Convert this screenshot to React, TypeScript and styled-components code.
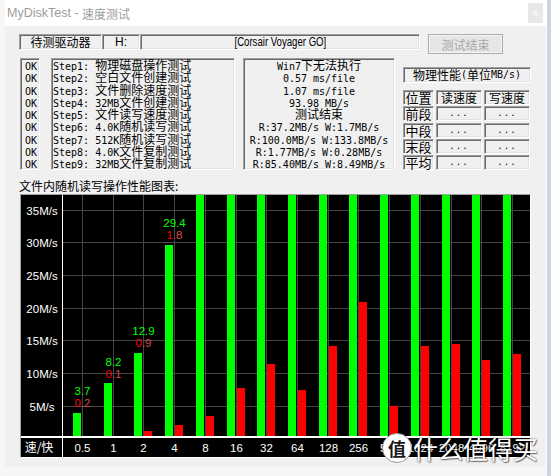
import React from "react";
import styled, { createGlobalStyle, css } from "styled-components";

const Global = createGlobalStyle`
  html, body { margin: 0; padding: 0; }
  body {
    width: 551px; height: 476px; overflow: hidden;
    background: linear-gradient(90deg, #f6f6f6 0, #f6f6f6 547px, #ccd4de 547px);
    font-family: "Liberation Sans", "Noto Sans CJK SC", sans-serif;
  }
`;

const sunken = css`
  box-sizing: border-box;
  border-style: solid;
  border-width: 1px;
  border-color: #a0a0a0 #ffffff #ffffff #a0a0a0;
  box-shadow: inset 1px 1px 0 #696969, inset -1px -1px 0 #e3e3e3;
  background: #f0f0f0;
`;

const Window = styled.div`
  position: relative;
  margin-left: 5px;
  width: 541px;
  height: 467px;
  background: #f0f0f0;
  border-right: 1px solid #ffffff;
  display: flex;
  flex-direction: column;
`;

const TitleBar = styled.div`
  height: 26px;
  background: #ffffff;
  display: flex;
  align-items: center;
  padding-left: 2px;
  font-family: "Liberation Sans", "Noto Sans CJK SC", sans-serif;
  font-size: 12.5px;
  color: #9c9c9c;
  white-space: pre;
`;

const CloseBtn = styled.div`
  margin-left: auto;
  margin-right: 3px;
  width: 15px;
  height: 20px;
  background: #e8e8e8;
  color: #ffffff;
  font-size: 11px;
  display: flex;
  align-items: center;
  justify-content: center;
`;

const Content = styled.div`
  padding: 8px 0 0 14px;
  display: flex;
  flex-direction: column;
`;

const DriveRow = styled.div`
  display: flex;
  align-items: flex-start;
`;

const Field = styled.div<{ $w: number; $cjk?: boolean }>`
  ${sunken};
  width: ${(p) => p.$w}px;
  height: 16px;
  display: flex;
  align-items: center;
  justify-content: center;
  font-family: ${(p) =>
    p.$cjk ? '"Noto Sans CJK SC", sans-serif' : '"Liberation Sans", sans-serif'};
  font-size: 12px;
  line-height: 1;
  color: #000;
  white-space: pre;
  overflow: hidden;
`;

const Narrow = styled.span`
  display: inline-block;
  transform: scaleX(0.8);
  white-space: pre;
`;

const EndButton = styled.button`
  margin-left: 8px;
  width: 75px;
  height: 20px;
  box-sizing: border-box;
  border: 1px solid #adadad;
  box-shadow: inset 0 0 0 1px #f4f4f4;
  background: #e6e6e6;
  color: #a6a6a6;
  font-family: "Noto Sans CJK SC", sans-serif;
  font-size: 12px;
  padding: 0;
`;

const InfoRow = styled.div`
  display: flex;
  margin-top: 4px;
  margin-left: 1px;
  height: 112px;
`;

const TextBox = styled.div<{ $w: number; $gap?: number; $center?: boolean; $pl?: number }>`
  ${sunken};
  width: ${(p) => p.$w}px;
  height: 112px;
  margin-left: ${(p) => p.$gap ?? 0}px;
  padding: 0 0 0 ${(p) => p.$pl ?? 1}px;
  text-align: ${(p) => (p.$center ? "center" : "left")};
  overflow: hidden;
  color: #000;
`;

const Line = styled.div`
  height: 12.3px;
  line-height: 12.3px;
  white-space: pre;
`;

const Half = styled.span`
  font-family: "DejaVu Sans Mono", "Liberation Mono", monospace;
  font-size: 10px;
`;

const Full = styled.span`
  font-family: "Noto Sans CJK SC", sans-serif;
  font-size: 12px;
`;

const Panel = styled.div`
  margin-left: 8px;
  width: 128px;
  display: flex;
  flex-direction: column;
`;

const PerfTitle = styled.div`
  ${sunken};
  margin-top: 9px;
  height: 16px;
  display: flex;
  align-items: center;
  justify-content: center;
  line-height: 1;
  white-space: pre;
`;

const Table = styled.div`
  margin-top: 7px;
  display: grid;
  grid-template-columns: 31px 46px 46px;
  grid-auto-rows: 15px;
  column-gap: 2px;
  row-gap: 1.25px;
`;

const Cell = styled.div<{ $big?: boolean; $dots?: boolean }>`
  ${sunken};
  display: flex;
  align-items: center;
  justify-content: center;
  font-family: ${(p) =>
    p.$dots ? '"DejaVu Sans Mono", monospace' : '"Noto Sans CJK SC", sans-serif'};
  font-size: ${(p) => (p.$dots ? 9 : p.$big ? 13 : 12)}px;
  letter-spacing: ${(p) => (p.$dots ? "1px" : "0")};
  line-height: 1;
  color: #000;
`;

const ChartCaption = styled.div`
  margin-top: 8px;
  height: 16px;
  line-height: 16px;
  font-family: "Noto Sans CJK SC", sans-serif;
  font-size: 12px;
  color: #000;
`;

const ChartFrame = styled.div`
  margin-left: 1px;
  width: 511px;
  height: 264px;
  box-sizing: border-box;
  border: 1px solid;
  border-color: #a0a0a0 #ffffff #ffffff #a0a0a0;
  background: #000;
  svg { display: block; }
`;

const Watermark = styled.div`
  position: absolute;
  left: 377px;
  top: 433px;
  display: flex;
  align-items: center;
  gap: 1px;
  pointer-events: none;
`;

const Badge = styled.div`
  width: 30px;
  height: 30px;
  box-sizing: border-box;
  border-radius: 50%;
  background: #ffffff;
  border: 1px solid #9a9a9a;
  display: flex;
  align-items: center;
  justify-content: center;
  font-family: "Noto Sans CJK SC", sans-serif;
  font-weight: 700;
  font-size: 18px;
  color: #1a1a1a;
`;

const WmText = styled.span`
  font-family: "Noto Sans CJK SC", sans-serif;
  font-size: 25px;
  line-height: 1;
  color: #ffffff;
  text-shadow: 0 0 2px rgba(0, 0, 0, 0.75), 1px 1px 1px rgba(0, 0, 0, 0.45);
`;

function Mixed({ text }: { text: string }) {
  const parts = text.match(/[\x00-\x7f]+|[^\x00-\x7f]+/g) || [];
  return (
    <>
      {parts.map((p, i) =>
        /^[\x00-\x7f]/.test(p) ? <Half key={i}>{p}</Half> : <Full key={i}>{p}</Full>
      )}
    </>
  );
}

const steps = [
  "Step1: 物理磁盘操作测试",
  "Step2: 空白文件创建测试",
  "Step3: 文件删除速度测试",
  "Step4: 32MB文件创建测试",
  "Step5: 文件读写速度测试",
  "Step6: 4.0K随机读写测试",
  "Step7: 512K随机读写测试",
  "Step8: 4.0K文件复制测试",
  "Step9: 32MB文件复制测试",
];

const results = [
  "Win7下无法执行",
  "0.57 ms/file",
  "1.07 ms/file",
  "93.98 MB/s",
  "测试结束",
  "R:37.2MB/s W:1.7MB/s",
  "R:100.0MB/s W:133.8MB/s",
  "R:1.77MB/s W:0.28MB/s",
  "R:85.40MB/s W:8.49MB/s",
];

const rowsLabels = ["前段", "中段", "末段", "平均"];

// chart geometry (page coordinates, converted to svg coords)
const OX = 21;
const OY = 195;
const W = 509;
const H = 262;
const BASE = 437;
const K = 6.54;
const cols = ["0.5", "1", "2", "4", "8", "16", "32", "64", "128", "256", "512", "1024", "2048", "4096", "8192"];
const reads = [3.7, 8.2, 12.9, 29.4, 99, 99, 99, 99, 99, 99, 99, 99, 99, 99, 99];
const writes = [0.2, 0.1, 0.9, 1.8, 3.26, 7.54, 11.1, 7.23, 13.96, 20.6, 4.79, 13.96, 14.27, 11.8, 12.7];
const labels: Record<number, [string, string]> = {
  0: ["3.7", "0.2"],
  1: ["8.2", "0.1"],
  2: ["12.9", "0.9"],
  3: ["29.4", "1.8"],
};
const gx = (i: number) => Math.round(82 + 30.71 * i);
const sx = (x: number) => x - OX;
const sy = (y: number) => y - OY;

function Chart() {
  const grid = "#454545";
  const yTicks = [35, 30, 25, 20, 15, 10, 5];
  return (
    <svg width={W} height={H} viewBox={`0 0 ${W} ${H}`} shapeRendering="crispEdges">
      {yTicks.map((v) => {
        const y = Math.round(438.5 - K * v);
        return <rect key={"h" + v} x={sx(63)} y={sy(y)} width={W - sx(63)} height={1} fill={grid} />;
      })}
      {cols.map((_, i) => (
        <rect key={"v" + i} x={sx(gx(i))} y={0} width={1} height={sy(436)} fill={grid} />
      ))}
      {cols.map((_, i) => {
        const g = gx(i);
        const gt = Math.max(OY, BASE - reads[i] * K);
        const rt = Math.max(OY, BASE - writes[i] * K);
        return (
          <g key={"b" + i}>
            <rect x={sx(g - 9)} y={sy(gt)} width={8} height={436 - gt} fill="#00ff00" />
            <rect x={sx(g + 1)} y={sy(rt)} width={8} height={Math.max(1, 436 - rt)} fill={writes[i] < 0.5 ? "#5a0000" : "#ff0000"} />
          </g>
        );
      })}
      <rect x={sx(62)} y={0} width={1} height={H} fill="#ffffff" />
      <rect x={0} y={sy(436)} width={W} height={2} fill="#ffffff" />
      <g fontFamily='"Liberation Sans", sans-serif' fontSize="11.5" textAnchor="middle" shapeRendering="auto">
        {yTicks.map((v) => (
          <text key={"yl" + v} x={sx(42)} y={sy(Math.round(438.5 - K * v) + 4.5)} fill="#ffffff">
            {v}M/s
          </text>
        ))}
        <text x={sx(39)} y={sy(452)} fill="#ffffff" fontFamily='"Noto Sans CJK SC", sans-serif' fontSize="12">
          速/快
        </text>
        {cols.map((c, i) => (
          <text key={"xl" + i} x={sx(gx(i) + 0.5)} y={sy(451.5)} fill="#ffffff">
            {c}
          </text>
        ))}
        {Object.keys(labels).map((k) => {
          const i = Number(k);
          const top = BASE - reads[i] * K;
          const [gv, rv] = labels[i];
          return (
            <g key={"vl" + i}>
              <text x={sx(gx(i) + 0.5)} y={sy(top - 17.5)} fill="#00ff00">
                {gv}
              </text>
              <text x={sx(gx(i) + 0.5)} y={sy(top - 5.5)} fill="#ff0000">
                <tspan>{rv[0]}</tspan>
                <tspan fill="#d84a4a">{rv.slice(1)}</tspan>
              </text>
            </g>
          );
        })}
      </g>
    </svg>
  );
}

export default function App() {
  return (
    <>
      <Global />
      <Window>
        <TitleBar>
          <span>MyDiskTest - </span>
          <Full>速度测试</Full>
          <CloseBtn>×</CloseBtn>
        </TitleBar>
        <Content>
          <DriveRow>
            <Field $w={83} $cjk>待测驱动器</Field>
            <Field $w={38}>H:</Field>
            <Field $w={280}>
              <Narrow>[Corsair Voyager GO]</Narrow>
            </Field>
            <EndButton disabled>测试结束</EndButton>
          </DriveRow>
          <InfoRow>
            <TextBox $w={20} $pl={4}>
              {steps.map((_, i) => (
                <Line key={i}>
                  <Half>OK</Half>
                </Line>
              ))}
            </TextBox>
            <TextBox $w={184} $gap={11}>
              {steps.map((s, i) => (
                <Line key={i}>
                  <Mixed text={s} />
                </Line>
              ))}
            </TextBox>
            <TextBox $w={152} $gap={8} $center $pl={0}>
              {results.map((s, i) => (
                <Line key={i}>
                  <Mixed text={s} />
                </Line>
              ))}
            </TextBox>
            <Panel>
              <PerfTitle>
                <Mixed text="物理性能(单位MB/s)" />
              </PerfTitle>
              <Table>
                <Cell $big>位置</Cell>
                <Cell>读速度</Cell>
                <Cell>写速度</Cell>
                {rowsLabels.map((r) => (
                  <React.Fragment key={r}>
                    <Cell $big>{r}</Cell>
                    <Cell $dots>...</Cell>
                    <Cell $dots>...</Cell>
                  </React.Fragment>
                ))}
              </Table>
            </Panel>
          </InfoRow>
          <ChartCaption>文件内随机读写操作性能图表:</ChartCaption>
          <ChartFrame>
            <Chart />
          </ChartFrame>
        </Content>
        <Watermark>
          <Badge>值</Badge>
          <WmText>什么值得买</WmText>
        </Watermark>
      </Window>
    </>
  );
}
